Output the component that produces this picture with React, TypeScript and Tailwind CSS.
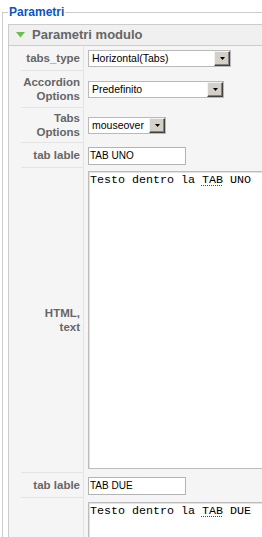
const labelCls =
  "flex items-center justify-end border-b border-r border-[#e4e4e4] pr-[3px] text-right text-[11.5px] font-bold leading-[14px] text-[#666]";

function Arrow() {
  return (
    <svg width="5" height="3" viewBox="0 0 5 3">
      <polygon points="0,0 5,0 2.5,3" fill="#000" />
    </svg>
  );
}

function FakeSelect({ value, width }: { value: string; width: string }) {
  return (
    <div className={`flex h-[17px] items-stretch border border-[#b9b9b9] bg-white ${width}`}>
      <span className="flex-1 pl-[3px] text-[10.5px] leading-[15px] text-black">{value}</span>
      <span className="flex w-[16px] items-center justify-center border border-t-[#f4f4f4] border-l-[#f4f4f4] border-b-[#404040] border-r-[#404040] bg-[#d4d0c8] shadow-[inset_-1px_-1px_#808080]">
        <Arrow />
      </span>
    </div>
  );
}

function TextBox({ value }: { value: string }) {
  return (
    <div className="h-[18px] w-[98px] border border-[#b4b4b4] bg-white pl-[1px] text-[10px] leading-[16px] text-black">
      {value}
    </div>
  );
}

function Editor({ tab, height }: { tab: string; height: string }) {
  return (
    <div
      className={`w-[300px] border border-[#bcbcbc] bg-white px-[1px] pt-[1px] font-['Liberation_Mono',monospace] text-[11.67px] leading-[14px] text-black shadow-[inset_1px_1px_#e2e2e2] ${height}`}
    >
      Testo dentro la{" "}
      <span className="underline decoration-red-600 decoration-dotted underline-offset-[2px]">TAB</span> {tab}
    </div>
  );
}

export default function App() {
  return (
    <div className="h-[537px] w-[262px] overflow-hidden bg-white font-['Liberation_Sans',Arial,sans-serif]">
      <div className="w-[420px] pt-[4px]">
        <fieldset className="ml-[2px] min-w-0 border border-[#ccc] px-[5px] pt-[4px]">
          <legend className="px-[1px] text-[12px] font-bold leading-[16px] text-[#0b55c4]">Parametri</legend>

          <div className="border border-[#ccc]">
            <div className="flex h-[21px] items-center gap-[7px] border-b border-[#ccc] bg-[#f0f0f0] pl-[7px]">
              <svg width="9" height="6" viewBox="0 0 9 6">
                <polygon points="0,0 9,0 4.5,5.5" fill="#6cbd4c" />
              </svg>
              <h3 className="text-[13px] font-bold leading-[16px] text-[#666]">Parametri modulo</h3>
            </div>

            <div className="grid grid-cols-[63px_1fr] bg-[#f5f5f5] pl-[12px]">
              <div className={`${labelCls} h-[25px]`}>tabs_type</div>
              <div className="flex items-center pl-[4px]">
                <FakeSelect value="Horizontal(Tabs)" width="w-[143px]" />
              </div>

              <div className={`${labelCls} h-[37px]`}>
                Accordion
                <br />
                Options
              </div>
              <div className="flex items-center pl-[4px]">
                <FakeSelect value="Predefinito" width="w-[136px]" />
              </div>

              <div className={`${labelCls} h-[35px]`}>
                Tabs
                <br />
                Options
              </div>
              <div className="flex items-center pl-[4px]">
                <FakeSelect value="mouseover" width="w-[78px]" />
              </div>

              <div className={`${labelCls} h-[25px]`}>tab lable</div>
              <div className="flex items-center pl-[4px]">
                <TextBox value="TAB UNO" />
              </div>

              <div className={`${labelCls} h-[305px]`}>
                HTML,
                <br />
                text
              </div>
              <div className="pl-[4px] pt-[3px]">
                <Editor tab="UNO" height="h-[298px]" />
              </div>

              <div className={`${labelCls} h-[25px]`}>tab lable</div>
              <div className="flex items-center pl-[4px]">
                <TextBox value="TAB DUE" />
              </div>

              <div className={`${labelCls} h-[120px]`}></div>
              <div className="pl-[4px] pt-[4px]">
                <Editor tab="DUE" height="h-[200px]" />
              </div>
            </div>
          </div>
        </fieldset>
      </div>
    </div>
  );
}
